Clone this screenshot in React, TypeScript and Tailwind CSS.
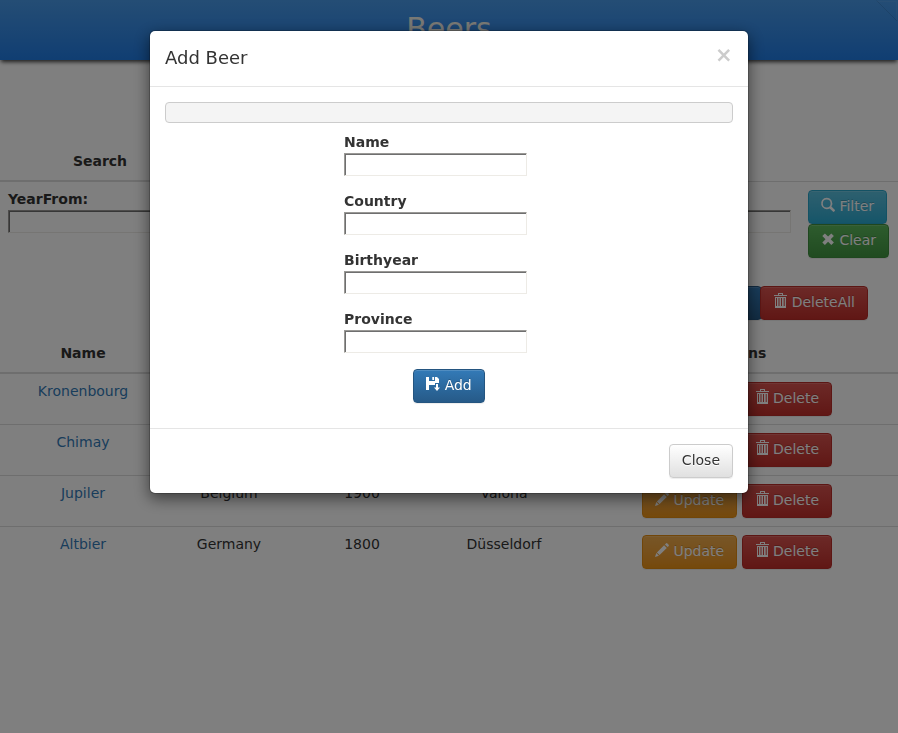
import React from "react";

type IconName = "search" | "remove" | "trash" | "pencil" | "save";

function Icon({ name }: { name: IconName }) {
  return (
    <svg viewBox="0 0 14 14" className="mr-[4.45px] mb-[2px] inline-block h-[14px] w-[14px] shrink-0 overflow-visible fill-current">
      {name === "search" && (
        <path d="M5.7-.2a5.7 5.7 0 1 0 3 10.6l3.2 3.2a.9.9 0 0 0 1.3 0l.5-.5a.9.9 0 0 0 0-1.3l-3.3-3.2A5.7 5.7 0 0 0 5.7-.2Zm0 1.8a3.9 3.9 0 1 1 0 7.8 3.9 3.9 0 0 1 0-7.8Z" />
      )}
      {name === "remove" && (
        <path d="M3.9 1.4 7.1 4.6 10.3 1.4 12.9 4 9.7 7.2 12.9 10.4 10.3 13 7.1 9.8 3.9 13 1.3 10.4 4.5 7.2 1.3 4Z" />
      )}
      {name === "trash" && (
        <path
          fillRule="evenodd"
          d="M5 -1h5v2h4v1H1V1h4V-1Zm1 1v1h3V0H6ZM2 3h11v11H2V3Zm1 1v8h1V4H3Zm2.5 0v8h1V4h-1Zm2.5 0v8h1V4H8Zm2.7 0v8h1V4h-1Z"
        />
      )}
      {name === "pencil" && (
        <path d="m11.2.3.7-.2 2 2-.1.8-1.2 1.2-2.7-2.7ZM9.1 2.2l2.7 2.7-7.2 7.2-2.7-2.7ZM1.3 10l2.6 2.7L0 14Z" />
      )}
      {name === "save" && (
        <path d="M0 0h3v4h6V0h2l2 2v4H9v2H3v5H0ZM6.3 0h1.8v3H6.3ZM10 7h2v3.5h2L11 14l-3-3.5h2Z" />
      )}
    </svg>
  );
}

const base =
  "flex h-[34px] shrink-0 items-center rounded-[4px] border px-3 pb-[2px] text-[14px] leading-5 text-white bg-linear-to-b shadow-[inset_0_1px_0_rgba(255,255,255,0.15),0_1px_1px_rgba(0,0,0,0.075)] [text-shadow:0_-1px_0_rgba(0,0,0,0.2)] ";

const tones = {
  danger: "border-[#b92c28] from-[#d9534f] to-[#c12e2a]",
  warning: "border-[#e38d13] from-[#f0ad4e] to-[#eb9316]",
  info: "border-[#28a4c9] from-[#5bc0de] to-[#2aabd2]",
  success: "border-[#3e8f3e] from-[#5cb85c] to-[#419641]",
  primary: "border-[#245580] from-[#337ab7] to-[#265a88]",
};

function Button({ tone, icon, children }: { tone: keyof typeof tones; icon: IconName; children: string }) {
  return (
    <button className={base + tones[tone]}>
      <Icon name={icon} />
      {children}
    </button>
  );
}

function Field({ label }: { label: string }) {
  return (
    <label className="block h-[59px] w-[183px] font-bold leading-5">
      <span className="block h-[21px]">{label}</span>
      <input className="block h-[23px] w-[183px] border border-t-[#9a9996] border-l-[#9a9996] border-r-[#edebe6] border-b-[#edebe6] bg-white shadow-[inset_1px_1px_0_#6f6f6f]" />
    </label>
  );
}

const beers = [
  ["Kronenbourg", "France", "1664", "Alsace"],
  ["Chimay", "Belgium", "1850", "Hainaut"],
  ["Jupiler", "Belgium", "1900", "Valona"],
  ["Altbier", "Germany", "1800", "Düsseldorf"],
];

const columns = "grid grid-cols-[166px_126px_140px_144px_322px] text-center";

function Page() {
  return (
    <div className="h-[733px] w-[898px] overflow-hidden bg-white">
      <header className="relative h-[60px] bg-linear-to-b from-[#499bea] to-[#207ce5] text-center text-[30px] leading-[58px] text-[#f2f2ea] shadow-[0_3px_4px_-1px_rgba(0,0,0,0.75)]">
        Beers
        <svg className="absolute top-0 right-0 h-[22px] w-[22px]" viewBox="0 0 22 22" fill="none">
          <path d="M1 1.5h19.5v19" stroke="#fff" strokeOpacity=".06" />
          <path d="M.5.5l20.5 20.5" stroke="#000" strokeOpacity=".1" />
        </svg>
      </header>
      <section>
        <div className="flex h-[122px] items-end font-bold">
          <div className="h-[31px] w-[200px] border-b-2 border-[#ddd] text-center">Search</div>
          <div className="h-px flex-1 bg-[#ddd]" />
        </div>
        <div className="flex h-[104px]">
          <div className="w-[200px] pt-[7px] pl-2"><Field label="YearFrom:" /></div>
          <div className="w-[200px] pt-[7px] pl-2"><Field label="YearTo:" /></div>
          <div className="w-[200px] pt-[7px] pl-2"><Field label="Country:" /></div>
          <div className="w-[200px] pt-[7px] pl-2"><Field label="Province:" /></div>
          <div className="flex flex-col items-start pt-2 pl-2">
            <Button tone="info" icon="search">Filter</Button>
            <Button tone="success" icon="remove">Clear</Button>
          </div>
        </div>
      </section>
      <div className="flex h-[34px] justify-end pr-[30px]">
        <div className="-mr-[1.4px]">
          <Button tone="primary" icon="save">Add Initial</Button>
        </div>
        <div className="relative">
          <Button tone="danger" icon="trash">DeleteAll</Button>
        </div>
      </div>
      <section>
        <div className={columns + " h-[54px] border-b-2 border-[#ddd] pt-[23px] font-bold"}>
          <div>Name</div><div>Country</div><div>Birthyear</div><div>Province</div><div>Actions</div>
        </div>
        {beers.map((row) => (
          <div key={row[0]} className={columns + " h-[51px] border-b border-[#ddd] pt-[7px] last:border-b-0"}>
            <a className="text-[#337ab7]">{row[0]}</a>
            <div>{row[1]}</div>
            <div>{row[2]}</div>
            <div>{row[3]}</div>
            <div className="flex justify-center gap-[4.45px] pt-px">
              <Button tone="warning" icon="pencil">Update</Button>
              <Button tone="danger" icon="trash">Delete</Button>
            </div>
          </div>
        ))}
      </section>
    </div>
  );
}

function Dialog() {
  return (
    <div className="fixed inset-0 flex items-start justify-center bg-black/50">
      <div className="mt-[30px] h-[464px] w-[600px] rounded-[6px] border border-black/20 bg-white bg-clip-padding shadow-[0_5px_15px_rgba(0,0,0,0.5)]">
        <div className="flex h-[56px] justify-between border-b border-[#e5e5e5] px-[15px] pt-[14px]">
          <h4 className="text-[18px] leading-[26px]">Add Beer</h4>
          <button className="h-[21px] pr-[0.4px] text-[21px] font-bold leading-[21px] text-[#ccc]">×</button>
        </div>
        <div className="h-[342px] border-b border-[#e5e5e5] px-[15px] pt-[15px]">
          <div className="h-[21px] rounded-[4px] border border-[#ccc] bg-[#f4f4f4]" />
          <div className="ml-[179px] pt-[9px]">
            <Field label="Name" />
            <Field label="Country" />
            <Field label="Birthyear" />
            <Field label="Province" />
          </div>
          <div className="flex justify-center pt-[1px]">
            <Button tone="primary" icon="save">Add</Button>
          </div>
        </div>
        <div className="flex justify-end px-[15px] pt-[15px]">
          <button className="h-[34px] rounded-[4px] border border-[#ccc] bg-linear-to-b from-white to-[#e0e0e0] px-3 pb-[2px] leading-5 shadow-[inset_0_1px_0_rgba(255,255,255,0.15),0_1px_1px_rgba(0,0,0,0.075)] [text-shadow:0_1px_0_#fff]">
            Close
          </button>
        </div>
      </div>
    </div>
  );
}

export default function App() {
  return (
    <div className="text-[14px] leading-5 text-[#333] [font-family:'DejaVu_Sans',sans-serif]">
      <Page />
      <Dialog />
    </div>
  );
}
